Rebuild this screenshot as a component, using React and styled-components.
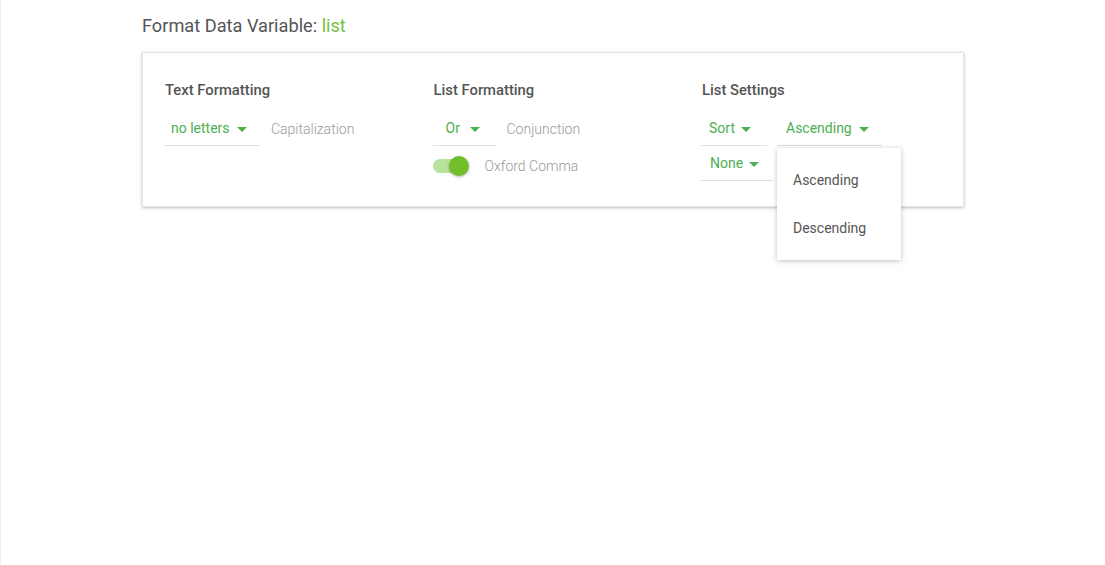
import React from "react";
import styled, { createGlobalStyle } from "styled-components";

const green = "#4caf50";

const GlobalStyle = createGlobalStyle`
  html, body {
    margin: 0;
    background: #fff;
    font-family: Roboto, "Liberation Sans", sans-serif;
  }
`;

const Page = styled.div`
  min-height: 565px;
  box-sizing: border-box;
  border-left: 1px solid #eee;
  padding: 14px 0 0 141px;
`;

const Title = styled.h1`
  margin: 0 0 14px;
  font-size: 18.2px;
  font-weight: 400;
  line-height: 24px;
  color: #555;
`;

const Variable = styled.span`
  color: #76c043;
`;

const Card = styled.section`
  width: 822px;
  box-sizing: border-box;
  border: 1px solid #e4e4e4;
  box-shadow: 0 1px 3px rgba(0, 0, 0, 0.25);
  padding: 28px 21px 25px;
  display: grid;
  grid-template-columns: 268.5px 268.5px 1fr;
`;

const Column = styled.div`
  display: flex;
  flex-direction: column;
`;

const Heading = styled.h2`
  margin: 0 0 12px 1px;
  font-size: 14.8px;
  font-weight: 500;
  line-height: 18px;
  color: #555;
`;

const Row = styled.div`
  display: flex;
  align-items: center;
  height: 35px;
  box-sizing: border-box;
  padding-top: ${(p) => p.$offset || 0}px;
  gap: ${(p) => p.$gap || 0}px;
`;

const SelectWrap = styled.div`
  position: relative;
`;

const Select = styled.div`
  width: ${(p) => p.$width}px;
  height: 35px;
  box-sizing: border-box;
  display: flex;
  align-items: center;
  padding-left: ${(p) => p.$pad}px;
  border-bottom: 1px solid #e0e0e0;
  color: ${green};
  font-size: 14px;
  cursor: pointer;
`;

const Arrow = styled.span`
  width: 0;
  height: 0;
  margin-left: ${(p) => p.$gap}px;
  border-left: 5px solid transparent;
  border-right: 5px solid transparent;
  border-top: 5px solid ${green};
  margin-top: 2px;
`;

const Label = styled.span`
  margin-left: ${(p) => p.$gap}px;
  color: #999;
  font-size: 14px;
  font-weight: 300;
`;

const Toggle = styled.div`
  position: relative;
  width: 36px;
  height: 20px;
`;

const Track = styled.div`
  position: absolute;
  left: 0;
  top: 3px;
  width: 30px;
  height: 14px;
  border-radius: 7px;
  background: #b8e39c;
`;

const Knob = styled.div`
  position: absolute;
  left: 16px;
  top: 0;
  width: 20px;
  height: 20px;
  border-radius: 50%;
  background: #72bf2c;
  box-shadow: 0 1px 3px rgba(0, 0, 0, 0.3);
`;

const Menu = styled.ul`
  position: absolute;
  left: 0;
  top: 37px;
  width: 124px;
  margin: 0;
  padding: 8px 0;
  list-style: none;
  background: #fff;
  box-shadow: 0 1px 5px rgba(0, 0, 0, 0.25);
  z-index: 2;
`;

const MenuItem = styled.li`
  height: 48px;
  line-height: 48px;
  padding-left: 16px;
  font-size: 14px;
  color: #555;
`;

function Dropdown({ value, width, pad, gap, children }) {
  return (
    <SelectWrap>
      <Select $width={width} $pad={pad}>
        {value}
        <Arrow $gap={gap} />
      </Select>
      {children}
    </SelectWrap>
  );
}

export default function App() {
  return (
    <>
      <GlobalStyle />
      <Page>
        <Title>
          Format Data Variable: <Variable>list</Variable>
        </Title>
        <Card>
          <Column>
            <Heading>Text Formatting</Heading>
            <Row>
              <Dropdown value="no letters" width={96} pad={7} gap={7} />
              <Label $gap={11}>Capitalization</Label>
            </Row>
          </Column>
          <Column>
            <Heading>List Formatting</Heading>
            <Row>
              <Dropdown value="Or" width={63} pad={13} gap={10} />
              <Label $gap={11}>Conjunction</Label>
            </Row>
            <Row $offset={4}>
              <Toggle>
                <Track />
                <Knob />
              </Toggle>
              <Label $gap={16}>Oxford Comma</Label>
            </Row>
          </Column>
          <Column>
            <Heading>List Settings</Heading>
            <Row $gap={10}>
              <Dropdown value="Sort" width={66} pad={8} gap={6} />
              <Dropdown value="Ascending" width={105} pad={9} gap={7}>
                <Menu>
                  <MenuItem>Ascending</MenuItem>
                  <MenuItem>Descending</MenuItem>
                </Menu>
              </Dropdown>
            </Row>
            <Row>
              <Dropdown value="None" width={72} pad={9} gap={6} />
            </Row>
          </Column>
        </Card>
      </Page>
    </>
  );
}
